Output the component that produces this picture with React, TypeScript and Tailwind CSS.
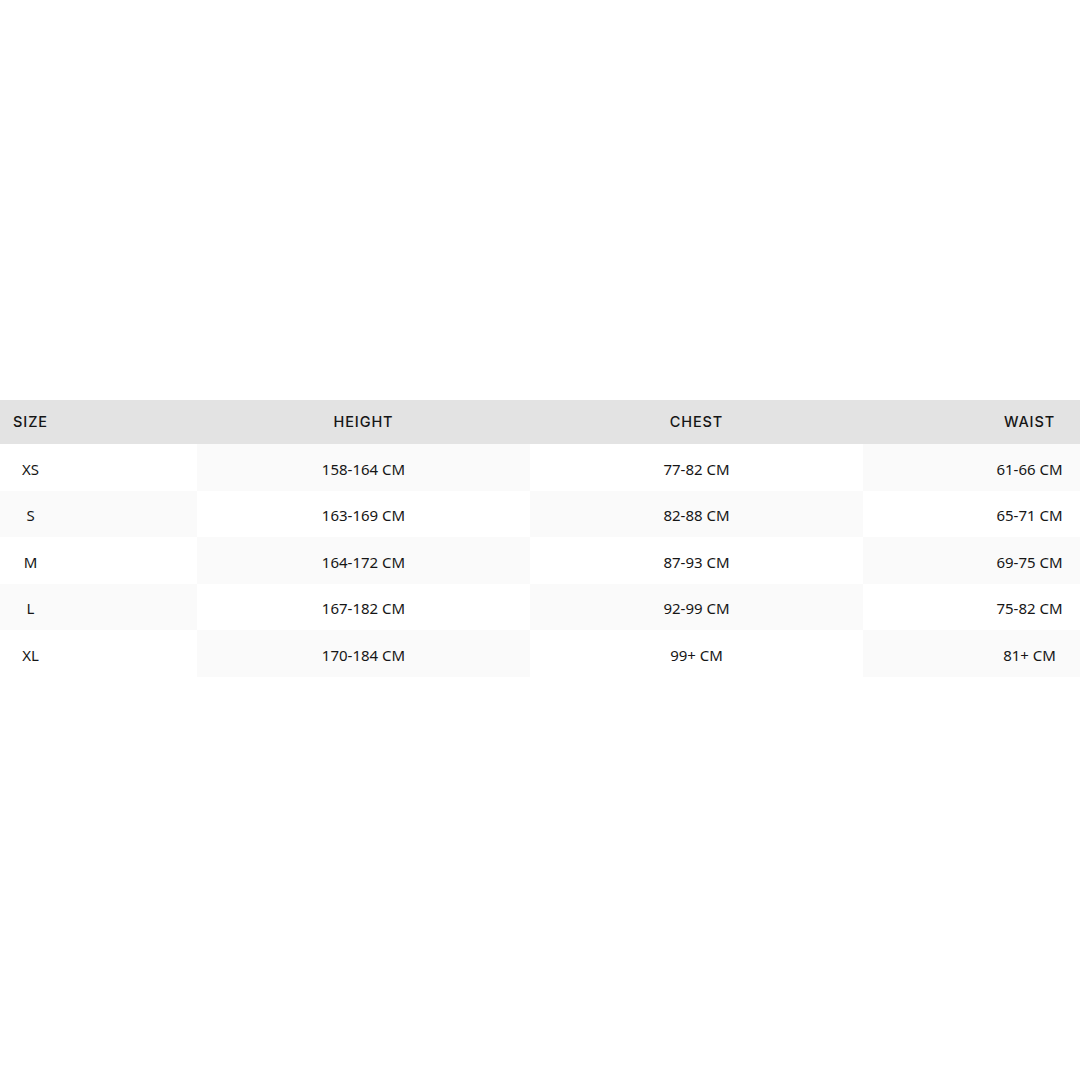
import React from 'react';

const headers = ['SIZE', 'HEIGHT', 'CHEST', 'WAIST'];

const rows: string[][] = [
  ['XS', '158-164 CM', '77-82 CM', '61-66 CM'],
  ['S', '163-169 CM', '82-88 CM', '65-71 CM'],
  ['M', '164-172 CM', '87-93 CM', '69-75 CM'],
  ['L', '167-182 CM', '92-99 CM', '75-82 CM'],
  ['XL', '170-184 CM', '99+ CM', '81+ CM'],
];

export default function App() {
  return (
    <div className="w-[1080px] h-[1080px] bg-white overflow-hidden pt-[400px]">
      {/* table is wider than the frame, cropped on both sides */}
      <div className="ml-[-136px] w-[1332px]">
        <div className="grid grid-cols-4 h-[44px] bg-[#e3e3e3] font-['Inter',sans-serif] text-[14.5px] font-medium tracking-[0.06em] text-[#161616]">
          {headers.map((h) => (
            <div key={h} className="flex items-center justify-center pb-[1px]">
              {h}
            </div>
          ))}
        </div>

        {rows.map((row, r) => (
          <div
            key={row[0]}
            className="grid grid-cols-4 h-[46.5px] font-['Noto_Sans',sans-serif] text-[15px] text-[#161616]"
          >
            {row.map((cell, c) => (
              <div
                key={c}
                className={
                  (r + c) % 2 === 1
                    ? 'flex items-center justify-center pt-[3px] bg-[#fafafa]'
                    : 'flex items-center justify-center pt-[3px] bg-white'
                }
              >
                {cell}
              </div>
            ))}
          </div>
        ))}
      </div>
    </div>
  );
}
